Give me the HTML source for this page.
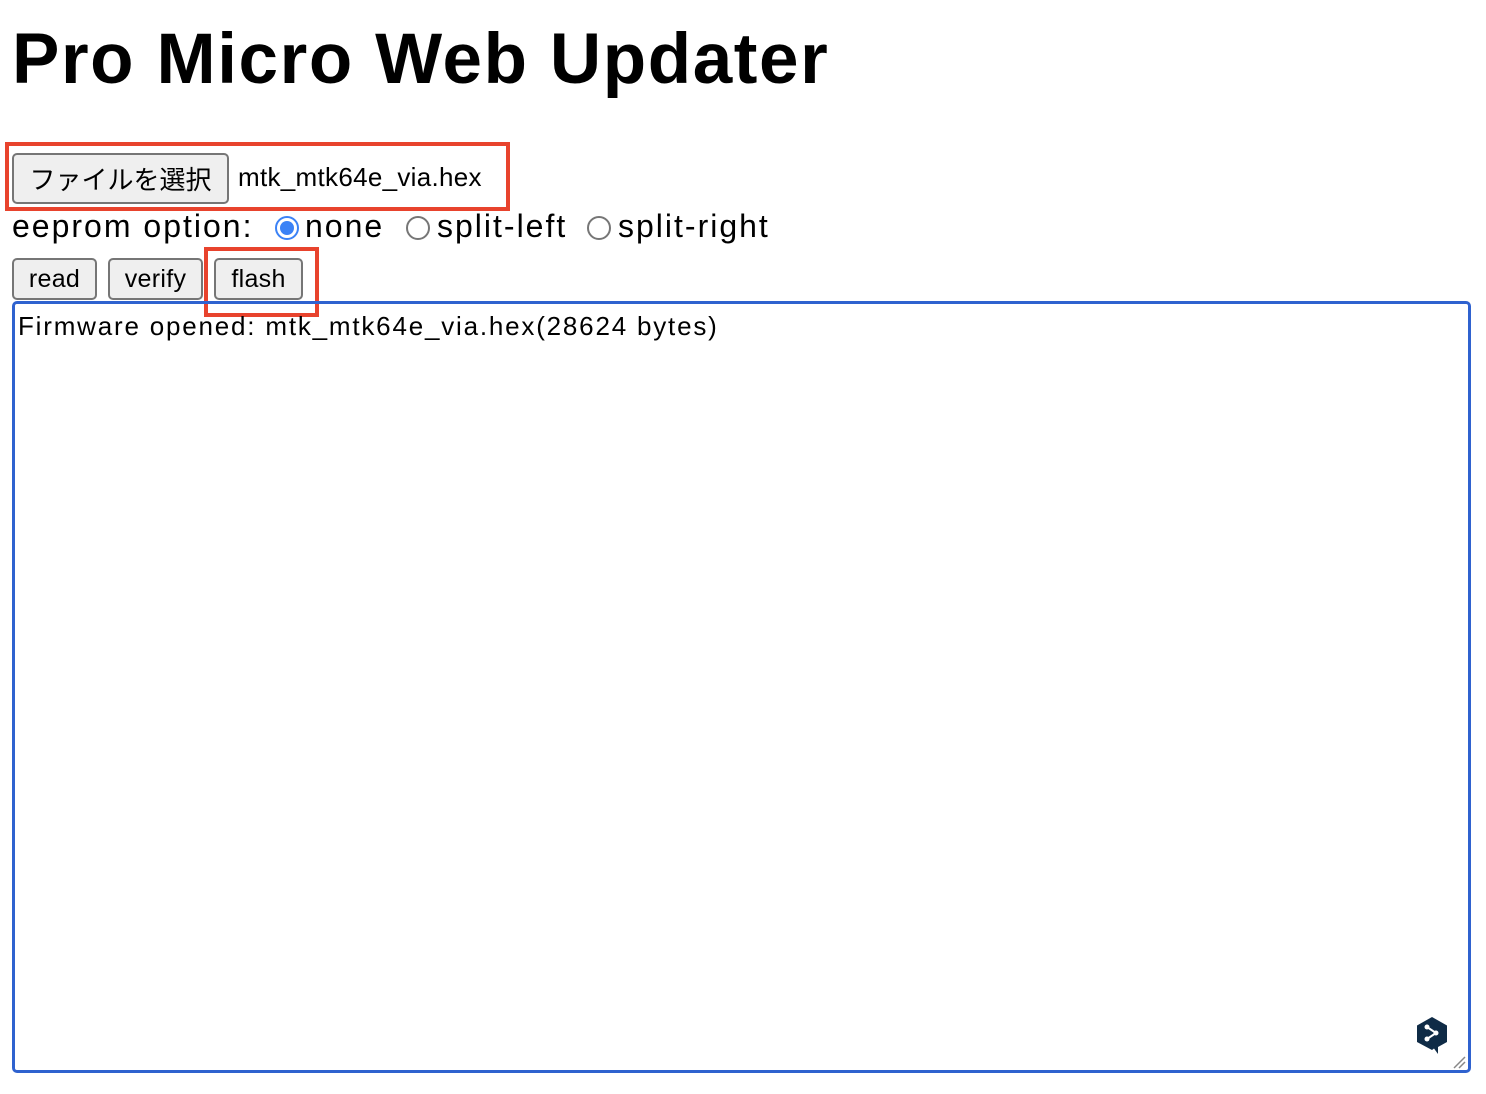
<!DOCTYPE html>
<html><head><meta charset="utf-8"><style>
body{margin:0;width:1486px;height:1094px;background:#fff;position:relative;font-family:"Liberation Sans","Noto Sans CJK JP",sans-serif;color:#000;overflow:hidden}
.a{position:absolute;white-space:nowrap}
h1{position:absolute;left:12px;top:20px;margin:0;font-size:71px;font-weight:bold;letter-spacing:1.6px;line-height:80px}
.btn{position:absolute;background:#efefef;border:2px solid #767676;border-radius:5px;box-sizing:border-box;font-size:25px;display:flex;align-items:center;justify-content:center;letter-spacing:0.3px}
.red{position:absolute;border:4px solid #e8432d;box-sizing:border-box}
.radio{position:absolute;width:24px;height:24px;border-radius:50%;box-sizing:border-box;border:2px solid #767676;background:#fff}
.e{font-size:32px;letter-spacing:2px}
</style></head><body>
<h1>Pro Micro Web Updater</h1>
<div class="btn" style="left:12px;top:153px;width:217px;height:51px;font-size:26px;letter-spacing:0">ファイルを選択</div>
<div class="a" style="left:238px;top:162px;font-size:26px;letter-spacing:0.3px">mtk_mtk64e_via.hex</div>
<div class="red" style="left:5px;top:142px;width:505px;height:69px"></div>
<div class="a e" style="left:12px;top:208px">eeprom option:</div>
<div class="radio" style="left:275px;top:216px;border:2px solid #3b82f6;"><div style="position:absolute;left:3px;top:3px;width:14px;height:14px;border-radius:50%;background:#3b82f6"></div></div>
<div class="a e" style="left:305px;top:208px">none</div>
<div class="radio" style="left:406px;top:216px"></div>
<div class="a e" style="left:437px;top:208px">split-left</div>
<div class="radio" style="left:587px;top:216px"></div>
<div class="a e" style="left:618px;top:208px">split-right</div>
<div class="btn" style="left:12px;top:258px;width:85px;height:42px">read</div>
<div class="btn" style="left:108px;top:258px;width:95px;height:42px">verify</div>
<div class="btn" style="left:214px;top:258px;width:89px;height:42px">flash</div>
<div class="red" style="left:204px;top:247px;width:115px;height:70px"></div>
<div style="position:absolute;left:12px;top:301px;width:1459px;height:772px;border:3px solid #2f62cf;border-radius:5px;box-sizing:border-box"></div>
<div class="a" style="left:18px;top:311px;font-size:26px;letter-spacing:1.8px">Firmware opened: mtk_mtk64e_via.hex(28624 bytes)</div>
<svg style="position:absolute;left:1416px;top:1016px" width="32" height="40" viewBox="0 0 32 40">
<path d="M16 1 L31 9.5 V26 L22 31 V38 L18 32.5 L16 34 L1 26 V9.5 Z" fill="#0f2b46"/>
<path d="M11 11 L20 17 L11 23" stroke="#fff" stroke-width="2" fill="none"/>
<circle cx="11" cy="11" r="2.5" fill="#fff"/><circle cx="20" cy="17" r="2.5" fill="#fff"/><circle cx="11" cy="23" r="2.5" fill="#fff"/>
</svg>
<svg style="position:absolute;left:1452px;top:1055px" width="14" height="14"><path d="M2 13 L13 2 M7 13 L13 7" stroke="#888" stroke-width="1.5"/></svg>
</body></html>
